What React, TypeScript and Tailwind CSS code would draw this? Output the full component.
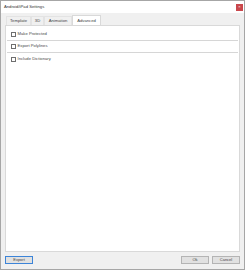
import React from "react";

const font = { fontFamily: '"Liberation Sans", Arial, sans-serif' };

const tabs = ["Template", "3D", "Animation", "Advanced"];
const options = ["Make Protected", "Export Polylines", "Include Dictionary"];

const Checkbox: React.FC<{ label: string; last?: boolean }> = ({ label, last }) => (
    <div
        className={`flex h-[12px] items-center gap-[1.5px] pl-[4px] ${
            last ? "" : "border-b border-[#d6d6d6]"
        }`}
    >
        <span className="h-[5px] w-[5px] border border-[#6e6e6e] bg-white" />
        <span className="text-[4.2px] leading-none text-[#4a4a4a]">{label}</span>
    </div>
);

const Button: React.FC<{ label: string; focused?: boolean; className?: string }> = ({
    label,
    focused,
    className,
}) => (
    <button
        className={`flex h-[8px] items-center justify-center bg-[#e1e1e1] text-[4px] leading-none text-[#444] ${
            focused ? "border border-[#3c84d8]" : "border border-[#b4b4b4]"
        } ${className ?? ""}`}
    >
        {label}
    </button>
);

export default function App() {
    return (
        <div className="h-[274px] w-[247px] bg-white" style={font}>
            <div className="flex h-[270px] w-[245px] flex-col border border-[#a6a6a6] bg-[#f0f0f0]">
                {/* Title bar */}
                <div className="flex h-[12px] items-center justify-between bg-white pl-[3px] pr-[1px]">
                    <span className="text-[4.2px] leading-none text-[#333]">Android/iPad Settings</span>
                    <span className="flex h-[7px] w-[7px] items-center justify-center bg-[#c9474c] text-[4px] leading-none text-white">
                        ×
                    </span>
                </div>

                <div className="flex flex-1 flex-col px-[4px] pt-[2px]">
                    {/* Tabs */}
                    <div className="flex h-[10px] items-end pl-[1px]">
                        {tabs.map((t, i) =>
                            i === tabs.length - 1 ? (
                                <div
                                    key={t}
                                    className="-mb-px flex h-[11px] w-[29px] items-center justify-center border border-b-0 border-[#d9d9d9] bg-white text-[4.2px] leading-none text-[#444]"
                                >
                                    {t}
                                </div>
                            ) : (
                                <div
                                    key={t}
                                    className={`flex h-[9px] items-center justify-center border border-b-0 border-[#e3e3e3] text-[4.2px] leading-none text-[#444] ${
                                        i === 0 ? "w-[25px]" : i === 1 ? "w-[13px]" : "w-[28px]"
                                    }`}
                                >
                                    {t}
                                </div>
                            )
                        )}
                    </div>

                    {/* Panel */}
                    <div className="flex h-[227px] flex-col border border-[#d9d9d9] bg-white px-[1px] pt-[3px]">
                        {options.map((o, i) => (
                            <Checkbox key={o} label={o} last={i === options.length - 1} />
                        ))}
                    </div>

                    {/* Footer */}
                    <div className="mt-[4px] flex items-center">
                        <Button label="Export" focused className="w-[28px]" />
                        <div className="flex-1" />
                        <Button label="Ok" className="w-[28px]" />
                        <Button label="Cancel" className="ml-[3px] w-[28px]" />
                    </div>
                </div>
            </div>
        </div>
    );
}
